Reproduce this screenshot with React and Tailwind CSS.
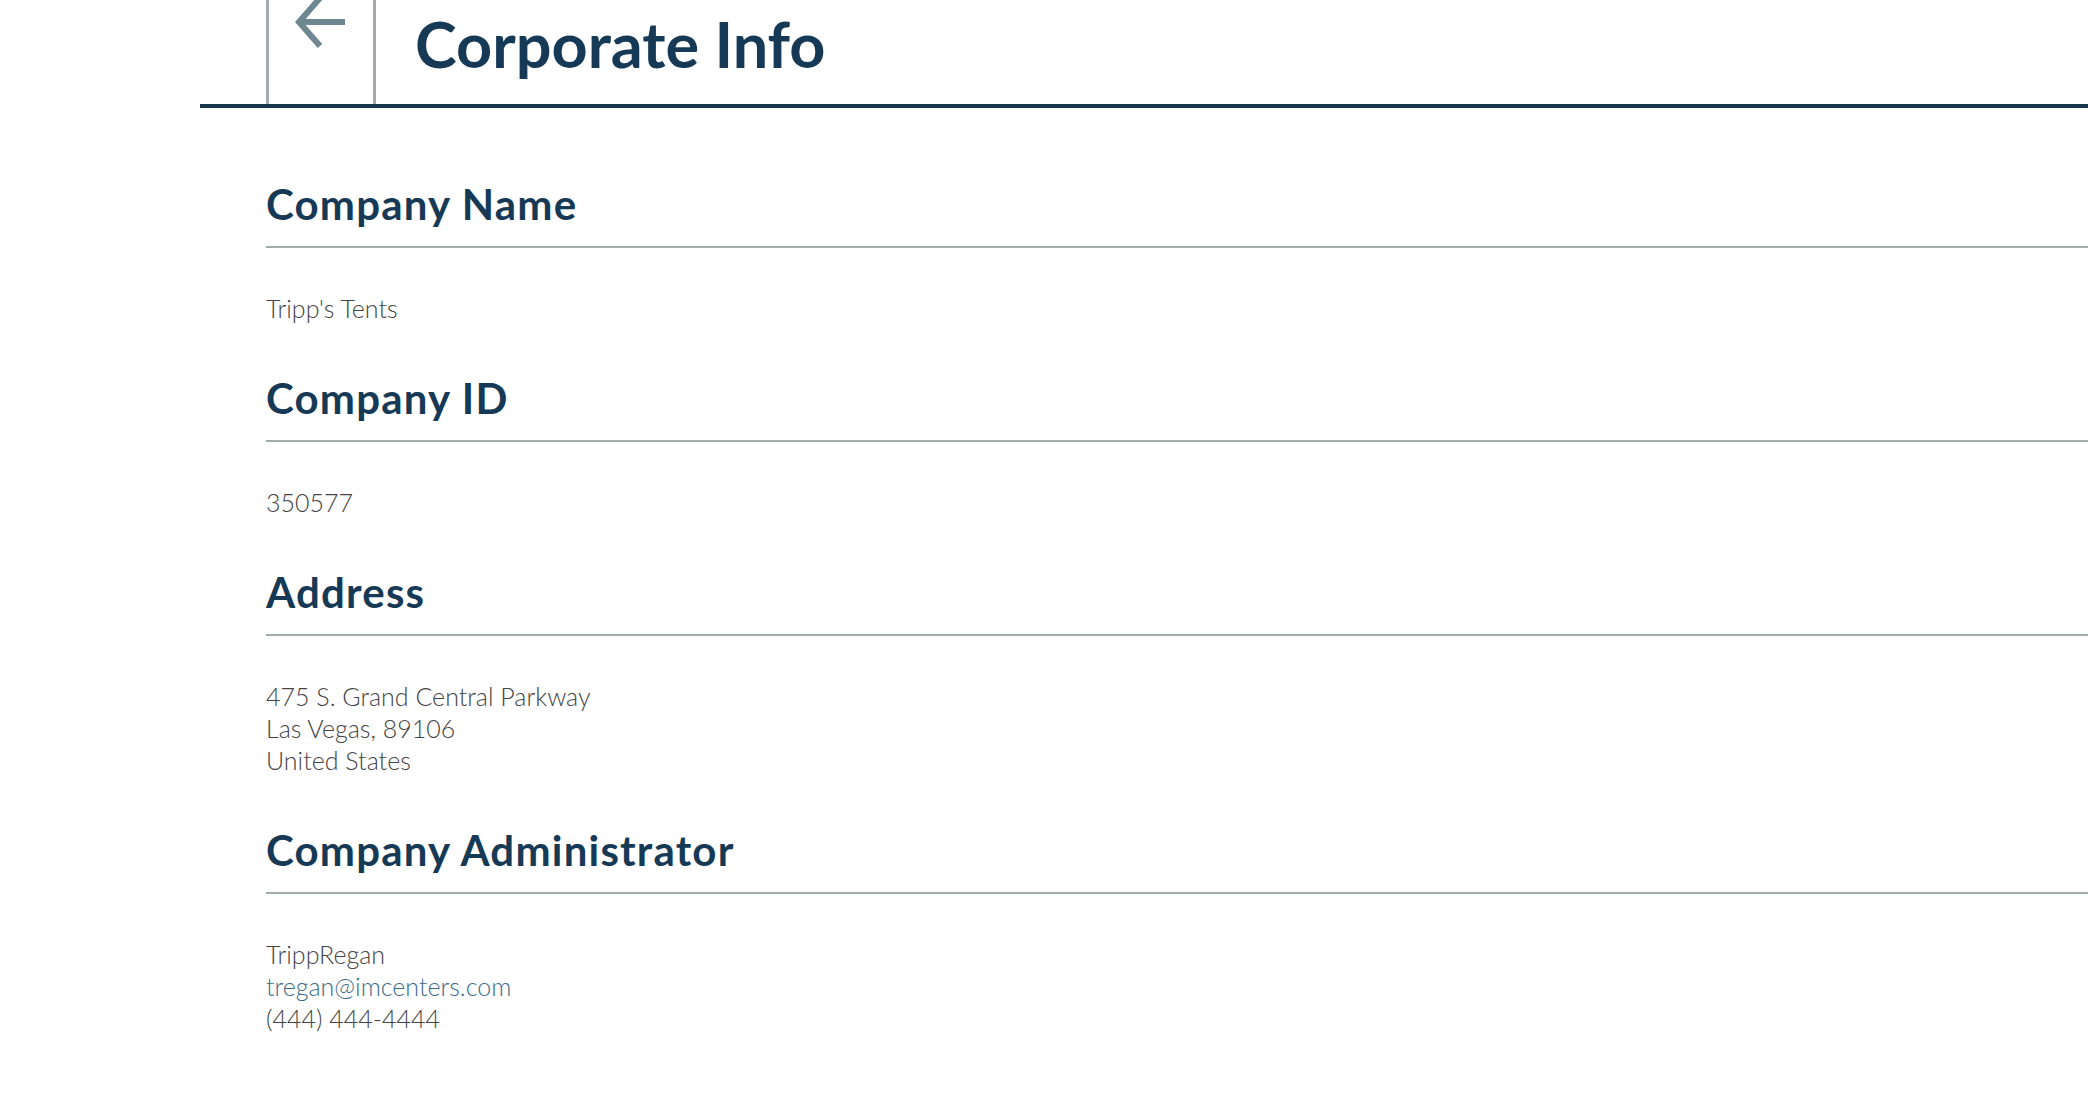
import React from 'react';

const sections = [
  { title: 'Company Name', lines: ["Tripp's Tents"] },
  { title: 'Company ID', lines: ['350577'] },
  { title: 'Address', lines: ['475 S. Grand Central Parkway', 'Las Vegas, 89106', 'United States'] },
  { title: 'Company Administrator', lines: ['TrippRegan', { email: 'tregan@imcenters.com' }, '(444) 444-4444'] },
];

function BackArrow() {
  return (
    <svg width="60" height="50" viewBox="0 0 60 50" fill="none" className="ml-[18px] block">
      <path d="M33 -2 L12 22 L33 46" stroke="#6f8793" strokeWidth="6" strokeLinejoin="miter" />
      <path d="M12 22 H58" stroke="#6f8793" strokeWidth="6" />
    </svg>
  );
}

export default function App() {
  return (
    <div className="min-h-screen bg-white pl-[200px] font-['Lato',sans-serif]">
      {/* Header */}
      <div className="flex h-[108px] border-b-4 border-[#17384f]">
        <div className="ml-[66px] h-full w-[110px] border-x-[3px] border-[#a4abae]">
          <BackArrow />
        </div>
        <h1 className="ml-[39px] mt-[12px] text-[63px] leading-none font-bold text-[#163a56]">Corporate Info</h1>
      </div>

      {/* Content */}
      <div className="pl-[66px] pt-[70px]">
        {sections.map((s, i) => (
          <section key={s.title} className={i > 0 ? 'mt-[48px]' : ''}>
            <h2 className="border-b-2 border-[#a4abae] pb-[16px] text-[42px] leading-[52px] font-bold tracking-[1.2px] text-[#163a56]">
              {s.title}
            </h2>
            <div className="mt-[44px] text-[25px] leading-[32px] font-light text-[#444444]">
              {s.lines.map((l, j) =>
                typeof l === 'string' ? (
                  <div key={j}>{l}</div>
                ) : (
                  <div key={j}>
                    <a href={`mailto:${l.email}`} className="text-[#3d6b87]">{l.email}</a>
                  </div>
                )
              )}
            </div>
          </section>
        ))}
      </div>
    </div>
  );
}
